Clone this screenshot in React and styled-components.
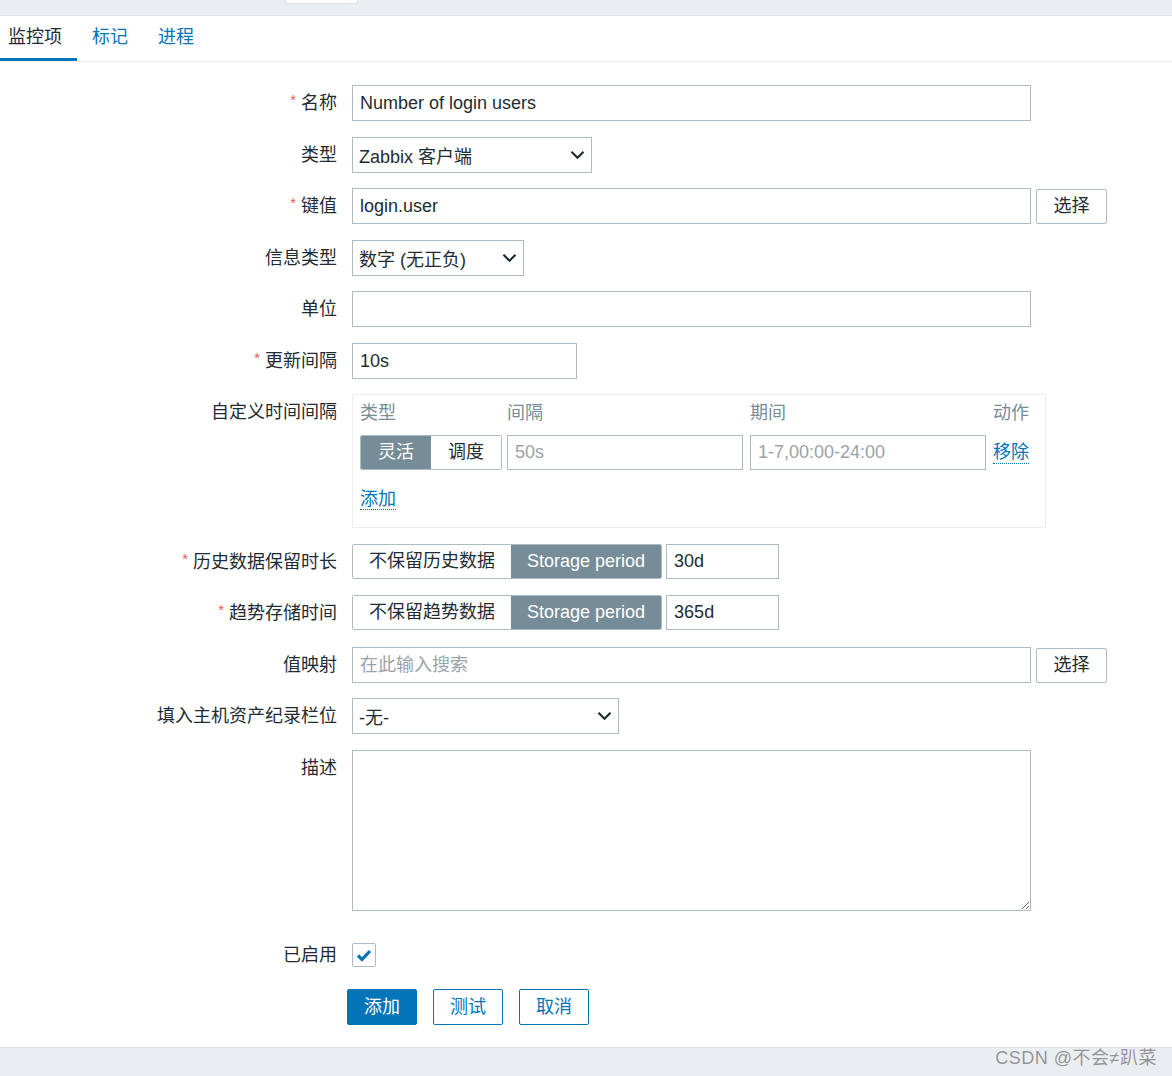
import React from 'react'
import styled, { createGlobalStyle } from 'styled-components'

const GlobalStyle = createGlobalStyle`
  html, body {
    margin: 0;
    padding: 0;
    background: #ffffff;
    font-family: "Liberation Sans", Arial, "Noto Sans CJK SC", sans-serif;
    font-size: 18px;
    color: #1f2c33;
  }
  * { box-sizing: border-box; }
`

const Page = styled.div`
  width: 1172px;
  min-height: 1076px;
  display: flex;
  flex-direction: column;
`

const TopStrip = styled.div`
  height: 16px;
  background: #ebeef0;
  border-bottom: 1px solid #dde2e5;
  padding-left: 285px;
`

const StripTab = styled.div`
  width: 73px;
  height: 4px;
  background: #ffffff;
  border: 1px solid #dfe4e7;
  border-top: none;
  border-radius: 0 0 3px 3px;
`

const TabBar = styled.div`
  display: flex;
  height: 46px;
  border-bottom: 1px solid #ebeef0;
`

const Tab = styled.div`
  padding: 0 15px;
  line-height: 42px;
  color: ${p => (p.$active ? '#1f2c33' : '#0275b8')};
  border-bottom: 3px solid ${p => (p.$active ? '#0275b8' : 'transparent')};
  &:first-child { padding-left: 8px; }
`

const Form = styled.div`
  display: flex;
  flex-direction: column;
  gap: 15.5px;
  padding-top: 23px;
`

const Row = styled.div`
  display: grid;
  grid-template-columns: 337px 1fr;
  column-gap: 15px;
  margin-top: ${p => p.$extra || 0}px;
`

const Label = styled.div`
  text-align: right;
  line-height: 36px;
  height: 36px;
  white-space: nowrap;
`

const Star = styled.span`
  position: relative;
  top: -4px;
  color: #e45959;
  font-size: 15px;
  margin-right: 5px;
`

const Field = styled.div`
  display: flex;
  align-items: flex-start;
  gap: ${p => p.$gap || 0}px;
`

const TextInput = styled.div`
  width: ${p => p.$w}px;
  height: ${p => p.$h || 36}px;
  border: 1px solid #acbbc2;
  background: #ffffff;
  padding: 0 7px;
  line-height: ${p => (p.$h || 36) - 2}px;
  color: ${p => (p.$placeholder ? '#9aa3a8' : '#1f2c33')};
  white-space: nowrap;
  overflow: hidden;
`

const Select = styled.div`
  width: ${p => p.$w}px;
  height: 36px;
  border: 1px solid #acbbc2;
  padding: 0 6px 0 6px;
  display: flex;
  align-items: center;
  justify-content: space-between;
  white-space: nowrap;
`

const Chevron = () => (
  <svg width="15" height="10" viewBox="0 0 15 10">
    <path d="M1.5 1.8 L7.5 7.8 L13.5 1.8" fill="none" stroke="#1f2c33" strokeWidth="2.2" />
  </svg>
)

const PlainButton = styled.div`
  width: 71px;
  height: 35px;
  margin-top: 1px;
  border: 1px solid #acbbc2;
  border-radius: 2px;
  text-align: center;
  line-height: 33px;
  margin-left: 5px;
`

const Segmented = styled.div`
  display: flex;
  height: ${p => p.$h || 35}px;
  border: 1px solid #acbbc2;
  border-radius: 2px;
  overflow: hidden;
`

const Segment = styled.div`
  padding: 0 ${p => p.$pad || 17}px;
  line-height: ${p => (p.$h || 35) - 2}px;
  white-space: nowrap;
  background: ${p => (p.$on ? '#768d99' : '#ffffff')};
  color: ${p => (p.$on ? '#ffffff' : '#1f2c33')};
`

const IntervalBox = styled.div`
  width: 694px;
  border: 1px solid #ebeef0;
  padding: 6px 7px 16px 7px;
`

const IntervalGrid = styled.div`
  display: grid;
  grid-template-columns: 147px 243px 243px auto;
  row-gap: 10px;
`

const Head = styled.div`
  color: #768d99;
  line-height: 24px;
`

const Cell = styled.div`
  display: flex;
  align-items: center;
  height: 35px;
`

const Link = styled.span`
  color: #0275b8;
  border-bottom: 1px dotted #0275b8;
  line-height: 22px;
`

const AddLine = styled.div`
  margin-top: 17px;
  line-height: 24px;
`

const TextArea = styled.textarea`
  width: 679px;
  height: 161px;
  border: 1px solid #acbbc2;
  border-radius: 0;
  font: inherit;
  resize: both;
  display: block;
  margin: 0;
  padding: 6px 7px;
`

const CheckWrap = styled.div`
  height: 36px;
  display: flex;
  align-items: center;
`

const CheckBox = styled.div`
  width: 24px;
  height: 24px;
  border: 1px solid #acbbc2;
  border-radius: 2px;
  display: flex;
  align-items: center;
  justify-content: center;
`

const Actions = styled.div`
  display: flex;
  gap: 16px;
  margin-left: -5px;
`

const ActionButton = styled.div`
  width: 70px;
  height: 36px;
  border: 1px solid #0275b8;
  border-radius: 2px;
  text-align: center;
  line-height: 34px;
  background: ${p => (p.$primary ? '#0275b8' : '#ffffff')};
  color: ${p => (p.$primary ? '#ffffff' : '#0275b8')};
`

const Footer = styled.div`
  margin-top: 22px;
  flex: 1;
  background: #ebeef0;
  border-top: 1px solid #dde2e5;
  display: flex;
  justify-content: flex-end;
  padding: 0 15px 0 0;
`

const Watermark = styled.div`
  line-height: 20px;
  color: #8f9396;
  text-shadow: 0 0 1px #ffffff;
  font-size: 18px;
  letter-spacing: 0.5px;
`

const FormLabel = ({ req, children }) => (
  <Label>
    {req && <Star>*</Star>}
    {children}
  </Label>
)

export default function App() {
  return (
    <Page>
      <GlobalStyle />
      <TopStrip>
        <StripTab />
      </TopStrip>
      <TabBar>
        <Tab $active>监控项</Tab>
        <Tab>标记</Tab>
        <Tab>进程</Tab>
      </TabBar>

      <Form>
        <Row>
          <FormLabel req>名称</FormLabel>
          <Field>
            <TextInput $w={679}>Number of login users</TextInput>
          </Field>
        </Row>
        <Row>
          <FormLabel>类型</FormLabel>
          <Field>
            <Select $w={240}>Zabbix 客户端<Chevron /></Select>
          </Field>
        </Row>
        <Row>
          <FormLabel req>键值</FormLabel>
          <Field>
            <TextInput $w={679}>login.user</TextInput>
            <PlainButton>选择</PlainButton>
          </Field>
        </Row>
        <Row>
          <FormLabel>信息类型</FormLabel>
          <Field>
            <Select $w={172}>数字 (无正负)<Chevron /></Select>
          </Field>
        </Row>
        <Row>
          <FormLabel>单位</FormLabel>
          <Field>
            <TextInput $w={679} />
          </Field>
        </Row>
        <Row>
          <FormLabel req>更新间隔</FormLabel>
          <Field>
            <TextInput $w={225}>10s</TextInput>
          </Field>
        </Row>
        <Row>
          <FormLabel>自定义时间间隔</FormLabel>
          <Field>
            <IntervalBox>
              <IntervalGrid>
                <Head>类型</Head>
                <Head>间隔</Head>
                <Head>期间</Head>
                <Head>动作</Head>
                <Cell>
                  <Segmented>
                    <Segment $on>灵活</Segment>
                    <Segment>调度</Segment>
                  </Segmented>
                </Cell>
                <Cell>
                  <TextInput $w={236} $h={35} $placeholder>50s</TextInput>
                </Cell>
                <Cell>
                  <TextInput $w={236} $h={35} $placeholder>1-7,00:00-24:00</TextInput>
                </Cell>
                <Cell>
                  <Link>移除</Link>
                </Cell>
              </IntervalGrid>
              <AddLine>
                <Link>添加</Link>
              </AddLine>
            </IntervalBox>
          </Field>
        </Row>
        <Row>
          <FormLabel req>历史数据保留时长</FormLabel>
          <Field $gap={4}>
            <Segmented $h={35}>
              <Segment $pad={16}>不保留历史数据</Segment>
              <Segment $pad={16} $on>Storage period</Segment>
            </Segmented>
            <TextInput $w={113} $h={35}>30d</TextInput>
          </Field>
        </Row>
        <Row>
          <FormLabel req>趋势存储时间</FormLabel>
          <Field $gap={4}>
            <Segmented $h={35}>
              <Segment $pad={16}>不保留趋势数据</Segment>
              <Segment $pad={16} $on>Storage period</Segment>
            </Segmented>
            <TextInput $w={113} $h={35}>365d</TextInput>
          </Field>
        </Row>
        <Row>
          <FormLabel>值映射</FormLabel>
          <Field>
            <TextInput $w={679} $placeholder>在此输入搜索</TextInput>
            <PlainButton>选择</PlainButton>
          </Field>
        </Row>
        <Row>
          <FormLabel>填入主机资产纪录栏位</FormLabel>
          <Field>
            <Select $w={267}>-无-<Chevron /></Select>
          </Field>
        </Row>
        <Row>
          <FormLabel>描述</FormLabel>
          <Field>
            <TextArea defaultValue="" />
          </Field>
        </Row>
        <Row $extra={11}>
          <FormLabel>已启用</FormLabel>
          <CheckWrap>
            <CheckBox>
              <svg width="16" height="13" viewBox="0 0 16 13">
                <path d="M2 6.5 L6 10.5 L14 2" fill="none" stroke="#0275b8" strokeWidth="3.2" />
              </svg>
            </CheckBox>
          </CheckWrap>
        </Row>
        <Row>
          <div />
          <Actions>
            <ActionButton $primary>添加</ActionButton>
            <ActionButton>测试</ActionButton>
            <ActionButton>取消</ActionButton>
          </Actions>
        </Row>
      </Form>

      <Footer>
        <Watermark>CSDN @不会≠趴菜</Watermark>
      </Footer>
    </Page>
  )
}
